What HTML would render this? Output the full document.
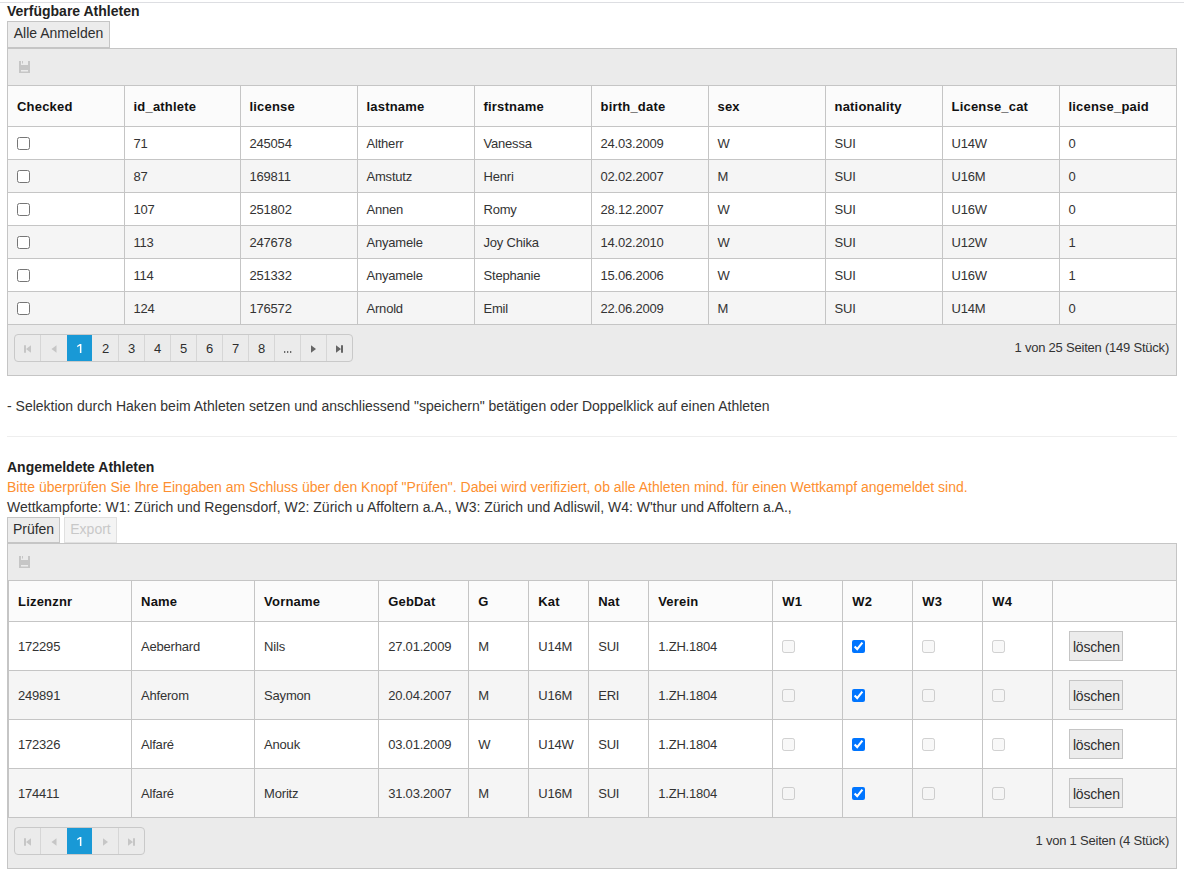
<!DOCTYPE html><html><head><meta charset="utf-8"><style>
*{box-sizing:border-box;margin:0;padding:0}
html,body{width:1184px;height:879px;overflow:hidden;background:#fff;font-family:"Liberation Sans",sans-serif;color:#000}
.abs{position:absolute}
.topline{left:0;top:2px;width:1184px;height:1px;background:#dddee2}
.h{font-weight:bold;font-size:14px;line-height:16px;color:#222}
.t{font-size:14px;line-height:16px;color:#333;white-space:nowrap}
.btn{position:absolute;background:#ececec;border:1px solid #c5c5c5;font-size:14px;color:#2e2e2e;text-align:center;white-space:nowrap}
.grid{position:absolute;left:7px;width:1170px;border:1px solid #c5c5c5;background:#fff;overflow:hidden}
.tb{position:absolute;left:0;right:0;top:0;background:#ebebeb;border-bottom:1px solid #c5c5c5}
.save{position:absolute;left:11px}
table{border-collapse:collapse;table-layout:fixed;position:absolute;left:0;font-size:13px}
th{background:#fbfbfb;font-weight:bold;text-align:left;color:#111;letter-spacing:0.2px;border-left:1px solid #c5c5c5;border-bottom:1px solid #c5c5c5;padding:1px 0 0 9px;white-space:nowrap;overflow:hidden}
td{border-left:1px solid #c5c5c5;border-top:1px solid #c5c5c5;padding:2px 0 0 9px;color:#333;letter-spacing:-0.2px;white-space:nowrap;overflow:hidden}
tr.alt td{background:#f5f5f5}
td.c{padding:0 0 0 9px}
td.d{padding:0 0 0 16px}
th:first-child,td:first-child{border-left:none}
.pager{position:absolute;left:0;right:0;background:#ebebeb;border-top:1px solid #c5c5c5}
.pg{position:absolute;left:6px;height:28px;border:1px solid #c9c9c9;border-radius:4px;overflow:hidden}
.it{position:absolute;top:0;width:26px;height:26px;border-left:1px solid #d6d6d6;font-size:13px;line-height:27px;text-align:center;color:#2e2e2e}
.it.nob{border-left:none;width:25px}
.it.sel{background:#1999d6;background-clip:padding-box;color:#fff;border-left-color:#ebebeb;width:26px;z-index:2}
.it.aft{border-left-color:#ebebeb}
.info{position:absolute;right:7px;font-size:13px;color:#333;letter-spacing:-0.22px}
input[type=checkbox]{margin:0;vertical-align:middle;width:13px;height:13px}
.del{display:inline-block;width:54px;height:30px;background:#ececec;border:1px solid #c5c5c5;font-size:14px;line-height:30px;text-align:center;color:#2e2e2e;vertical-align:middle}
</style></head><body>
<div class="abs topline"></div>
<div class="abs h" style="left:7px;top:3px">Verfügbare Athleten</div>
<div class="btn" style="left:7px;top:21px;width:103px;height:27px;line-height:23px">Alle Anmelden</div>
<div class="grid" style="top:48px;height:328px">
<div class="tb" style="height:37px"><svg class="save" style="top:12px" width="11" height="12" viewBox="0 0 11 12"><path d="M0 0h2v4h7V0h2v12H0z" fill="#c6c6c6"/><rect x="2" y="9" width="7" height="1.5" fill="#ebebeb"/><rect x="3" y="0" width="1" height="2.5" fill="#c6c6c6"/></svg></div>
<table style="top:37px;width:1168px">
<colgroup><col style="width:116px"><col style="width:116px"><col style="width:117px"><col style="width:117px"><col style="width:117px"><col style="width:117px"><col style="width:117px"><col style="width:117px"><col style="width:117px"><col style="width:117px"></colgroup>
<thead><tr style="height:40px"><th>Checked</th><th>id_athlete</th><th>license</th><th>lastname</th><th>firstname</th><th>birth_date</th><th>sex</th><th>nationality</th><th>License_cat</th><th>license_paid</th></tr></thead><tbody>
<tr style="height:33px"><td class="c"><input type="checkbox"></td><td>71</td><td>245054</td><td>Altherr</td><td>Vanessa</td><td>24.03.2009</td><td>W</td><td>SUI</td><td>U14W</td><td>0</td></tr>
<tr class="alt" style="height:33px"><td class="c"><input type="checkbox"></td><td>87</td><td>169811</td><td>Amstutz</td><td>Henri</td><td>02.02.2007</td><td>M</td><td>SUI</td><td>U16M</td><td>0</td></tr>
<tr style="height:33px"><td class="c"><input type="checkbox"></td><td>107</td><td>251802</td><td>Annen</td><td>Romy</td><td>28.12.2007</td><td>W</td><td>SUI</td><td>U16W</td><td>0</td></tr>
<tr class="alt" style="height:33px"><td class="c"><input type="checkbox"></td><td>113</td><td>247678</td><td>Anyamele</td><td>Joy Chika</td><td>14.02.2010</td><td>W</td><td>SUI</td><td>U12W</td><td>1</td></tr>
<tr style="height:33px"><td class="c"><input type="checkbox"></td><td>114</td><td>251332</td><td>Anyamele</td><td>Stephanie</td><td>15.06.2006</td><td>W</td><td>SUI</td><td>U16W</td><td>1</td></tr>
<tr class="alt" style="height:33px"><td class="c"><input type="checkbox"></td><td>124</td><td>176572</td><td>Arnold</td><td>Emil</td><td>22.06.2009</td><td>M</td><td>SUI</td><td>U14M</td><td>0</td></tr>
</tbody></table>
<div class="pager" style="top:275px;height:51px"><div class="pg" style="top:9px;width:339px"><div class="it nob" style="left:0px"><svg width="26" height="26" viewBox="0 0 26 26" style="position:absolute;left:0;top:0"><path d="M9 10.2h2v7.6H9z M11 14L16 10.2V17.8z" fill="#c6c6c6"/></svg></div><div class="it" style="left:25px"><svg width="26" height="26" viewBox="0 0 26 26" style="position:absolute;left:0;top:0"><path d="M10.5 14L15.5 10.2V17.8z" fill="#c6c6c6"/></svg></div><div class="it sel" style="left:51px"><svg width="26" height="26" viewBox="0 0 26 26" style="position:absolute;left:0;top:0"><path d="M12.9 9h1.5v9h-1.5z M12.9 9L10.2 10.8V12.3L12.9 10.6z" fill="#fff"/></svg></div><div class="it aft" style="left:77px">2</div><div class="it" style="left:103px">3</div><div class="it" style="left:129px">4</div><div class="it" style="left:155px">5</div><div class="it" style="left:181px">6</div><div class="it" style="left:207px">7</div><div class="it" style="left:233px">8</div><div class="it" style="left:259px"><svg width="26" height="26" viewBox="0 0 26 26" style="position:absolute;left:0;top:0"><rect x="9" y="16" width="1.3" height="2" fill="#6a6a6a"/><rect x="12" y="16" width="1.3" height="2" fill="#6a6a6a"/><rect x="15" y="16" width="1.3" height="2" fill="#6a6a6a"/></svg></div><div class="it" style="left:285px"><svg width="26" height="26" viewBox="0 0 26 26" style="position:absolute;left:0;top:0"><path d="M10 10.2L15 14L10 17.8z" fill="#656565"/></svg></div><div class="it" style="left:311px"><svg width="26" height="26" viewBox="0 0 26 26" style="position:absolute;left:0;top:0"><path d="M9 10.2L14 14L9 17.8z M14 10.2h2v7.6h-2z" fill="#656565"/></svg></div></div><div class="info" style="top:15px">1 von 25 Seiten (149 Stück)</div></div>
</div>
<div class="abs t" style="left:7px;top:398px">- Selektion durch Haken beim Athleten setzen und anschliessend "speichern" betätigen oder Doppelklick auf einen Athleten</div>
<div class="abs" style="left:7px;top:436px;width:1170px;height:1px;background:#eee"></div>
<div class="abs h" style="left:7px;top:459px">Angemeldete Athleten</div>
<div class="abs t" style="left:7px;top:479px;color:#fd8f30">Bitte überprüfen Sie Ihre Eingaben am Schluss über den Knopf "Prüfen". Dabei wird verifiziert, ob alle Athleten mind. für einen Wettkampf angemeldet sind.</div>
<div class="abs t" style="left:7px;top:499px">Wettkampforte: W1: Zürich und Regensdorf, W2: Zürich u Affoltern a.A., W3: Zürich und Adliswil, W4: W'thur und Affoltern a.A.,</div>
<div class="btn" style="left:7px;top:517px;width:53px;height:26px;line-height:23px">Prüfen</div>
<div class="btn" style="left:64px;top:517px;width:53px;height:26px;line-height:23px;background:#f4f4f4;border-color:#e0e0e0;color:#c8c8c8">Export</div>
<div class="grid" style="top:543px;height:326px">
<div class="tb" style="height:37px"><svg class="save" style="top:12px" width="11" height="12" viewBox="0 0 11 12"><path d="M0 0h2v4h7V0h2v12H0z" fill="#c6c6c6"/><rect x="2" y="9" width="7" height="1.5" fill="#ebebeb"/><rect x="3" y="0" width="1" height="2.5" fill="#c6c6c6"/></svg></div>
<table style="top:37px;width:1169px;border-left:1px solid #c5c5c5">
<colgroup><col style="width:123px"><col style="width:123px"><col style="width:124px"><col style="width:90px"><col style="width:60px"><col style="width:60px"><col style="width:60px"><col style="width:124px"><col style="width:70px"><col style="width:70px"><col style="width:70px"><col style="width:70px"><col style="width:124px"></colgroup>
<thead><tr style="height:40px"><th>Lizenznr</th><th>Name</th><th>Vorname</th><th>GebDat</th><th>G</th><th>Kat</th><th>Nat</th><th>Verein</th><th>W1</th><th>W2</th><th>W3</th><th>W4</th><th></th></tr></thead><tbody>
<tr style="height:49px"><td>172295</td><td>Aeberhard</td><td>Nils</td><td>27.01.2009</td><td>M</td><td>U14M</td><td>SUI</td><td>1.ZH.1804</td><td class="c"><input type="checkbox" disabled></td><td class="c"><input type="checkbox" checked></td><td class="c"><input type="checkbox" disabled></td><td class="c"><input type="checkbox" disabled></td><td class="d"><span class="del">löschen</span></td></tr>
<tr class="alt" style="height:49px"><td>249891</td><td>Ahferom</td><td>Saymon</td><td>20.04.2007</td><td>M</td><td>U16M</td><td>ERI</td><td>1.ZH.1804</td><td class="c"><input type="checkbox" disabled></td><td class="c"><input type="checkbox" checked></td><td class="c"><input type="checkbox" disabled></td><td class="c"><input type="checkbox" disabled></td><td class="d"><span class="del">löschen</span></td></tr>
<tr style="height:49px"><td>172326</td><td>Alfaré</td><td>Anouk</td><td>03.01.2009</td><td>W</td><td>U14W</td><td>SUI</td><td>1.ZH.1804</td><td class="c"><input type="checkbox" disabled></td><td class="c"><input type="checkbox" checked></td><td class="c"><input type="checkbox" disabled></td><td class="c"><input type="checkbox" disabled></td><td class="d"><span class="del">löschen</span></td></tr>
<tr class="alt" style="height:49px"><td>174411</td><td>Alfaré</td><td>Moritz</td><td>31.03.2007</td><td>M</td><td>U16M</td><td>SUI</td><td>1.ZH.1804</td><td class="c"><input type="checkbox" disabled></td><td class="c"><input type="checkbox" checked></td><td class="c"><input type="checkbox" disabled></td><td class="c"><input type="checkbox" disabled></td><td class="d"><span class="del">löschen</span></td></tr>
</tbody></table>
<div class="pager" style="top:273px;height:51px"><div class="pg" style="top:9px;width:131px"><div class="it nob" style="left:0px"><svg width="26" height="26" viewBox="0 0 26 26" style="position:absolute;left:0;top:0"><path d="M9 10.2h2v7.6H9z M11 14L16 10.2V17.8z" fill="#c6c6c6"/></svg></div><div class="it" style="left:25px"><svg width="26" height="26" viewBox="0 0 26 26" style="position:absolute;left:0;top:0"><path d="M10.5 14L15.5 10.2V17.8z" fill="#c6c6c6"/></svg></div><div class="it sel" style="left:51px"><svg width="26" height="26" viewBox="0 0 26 26" style="position:absolute;left:0;top:0"><path d="M12.9 9h1.5v9h-1.5z M12.9 9L10.2 10.8V12.3L12.9 10.6z" fill="#fff"/></svg></div><div class="it aft" style="left:77px"><svg width="26" height="26" viewBox="0 0 26 26" style="position:absolute;left:0;top:0"><path d="M10 10.2L15 14L10 17.8z" fill="#c6c6c6"/></svg></div><div class="it" style="left:103px"><svg width="26" height="26" viewBox="0 0 26 26" style="position:absolute;left:0;top:0"><path d="M9 10.2L14 14L9 17.8z M14 10.2h2v7.6h-2z" fill="#c6c6c6"/></svg></div></div><div class="info" style="top:15px">1 von 1 Seiten (4 Stück)</div></div>
</div>
</body></html>
